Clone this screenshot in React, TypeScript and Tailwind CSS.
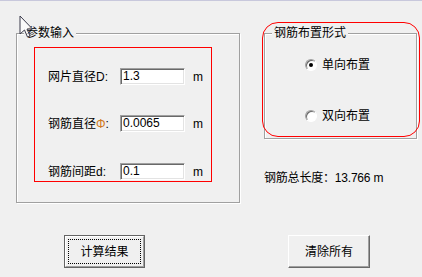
import React from 'react';

const font = { fontFamily: '"Liberation Sans", "Noto Sans CJK SC", sans-serif' };

function TextBox({ value }: { value: string }) {
  return (
    <div className="w-[65px] h-[17px] bg-white border border-t-[#a0a0a0] border-l-[#a0a0a0] border-b-white border-r-white shadow-[inset_1px_1px_0_#696969,inset_-1px_-1px_0_#e3e3e3] pl-[2px] text-[12px] leading-[15px] text-black">
      {value}
    </div>
  );
}

function Row({ label, value, className }: { label: React.ReactNode; value: string; className: string }) {
  return (
    <div className={`flex items-center h-[17px] pl-[13px] ${className}`}>
      <div className="w-[72px] text-[12px] leading-[16px] text-black whitespace-nowrap">{label}</div>
      <TextBox value={value} />
      <div className="ml-[8px] text-[12px] leading-[16px] text-black">m</div>
    </div>
  );
}

function Radio({ checked, label, className }: { checked?: boolean; label: string; className: string }) {
  return (
    <div className={`flex items-center h-[12px] ${className}`}>
      <div className="w-[12px] h-[12px] rounded-full bg-white border border-t-[#a0a0a0] border-l-[#a0a0a0] border-b-white border-r-white shadow-[inset_1px_1px_0_#696969] flex items-center justify-center">
        {checked && <div className="w-[4px] h-[4px] rounded-full bg-black" />}
      </div>
      <span className="ml-[5px] text-[12px] leading-[16px] text-black whitespace-nowrap">{label}</span>
    </div>
  );
}

export default function App() {
  return (
    <div
      className="relative w-[422px] h-[277px] bg-[#f0f0f0] overflow-hidden border-t border-[#c8c8dc]"
      style={font}
    >
      <div className="flex pt-[32px] pl-[16px]">
        {/* 参数输入 */}
        <div className="relative w-[224px] h-[170px] border border-[#a0a0a0] shadow-[inset_1px_1px_0_#fff,1px_1px_0_#fff] pl-[17px] pt-[13px]">
          <span className="absolute left-[7px] top-[-9px] px-[2px] bg-[#f0f0f0] text-[12px] leading-[16px] text-black">
            参数输入
          </span>
          <div className="w-[178px] h-[135px] border border-[#ff0000]">
            <Row className="mt-[20px]" label={<>网片直径D:</>} value="1.3" />
            <Row
              className="mt-[30px]"
              label={
                <>
                  钢筋直径<span className="text-[#d07a20]">Φ</span>:
                </>
              }
              value="0.0065"
            />
            <Row className="mt-[31px]" label={<>钢筋间距d:</>} value="0.1" />
          </div>
        </div>

        {/* 钢筋布置形式 */}
        <div className="ml-[24px] flex flex-col">
          <div className="relative w-[153px] h-[106px] border border-[#a0a0a0] shadow-[inset_1px_1px_0_#fff,1px_1px_0_#fff] pl-[40px] pt-[25px]">
            <span className="absolute left-[7px] top-[-9px] px-[2px] bg-[#f0f0f0] text-[12px] leading-[16px] text-black">
              钢筋布置形式
            </span>
            <Radio checked label="单向布置" className="" />
            <Radio label="双向布置" className="mt-[39px]" />
            <div className="absolute left-[-3px] top-[-12px] w-[158px] h-[115px] rounded-[16px] border border-[#ff0000] pointer-events-none" />
          </div>
          <div className="mt-[31px] text-[12px] leading-[16px] text-black whitespace-nowrap tracking-[-0.2px]">钢筋总长度：13.766 m</div>
        </div>
      </div>

      {/* buttons */}
      <div className="flex mt-[32px] pl-[64px] gap-[143px]">
        <div className="w-[81px] h-[33px] border border-[#646464] p-0">
          <div className="w-full h-full border border-t-white border-l-white border-b-[#a0a0a0] border-r-[#a0a0a0] bg-[#f0f0f0] p-[2px]">
            <div className="w-full h-full border border-dotted border-black flex items-center justify-center text-[12px] text-black">
              计算结果
            </div>
          </div>
        </div>
        <div className="w-[82px] h-[33px] border border-t-white border-l-white border-b-[#696969] border-r-[#696969] shadow-[inset_-1px_-1px_0_#a0a0a0] bg-[#f0f0f0] flex items-center justify-center text-[12px] text-black">
          清除所有
        </div>
      </div>

      {/* mouse cursor */}
      <svg className="absolute left-[19px] top-[14px]" width="16" height="24" viewBox="0 0 16 24">
        <path
          d="M1 1 L1 19 L5.5 15 L8.5 22 L11 21 L8 14 L13.5 14 Z"
          fill="#ffffff"
          fillOpacity="0.75"
          stroke="#3a3a4a"
          strokeWidth="1"
          strokeLinejoin="round"
        />
      </svg>
    </div>
  );
}
